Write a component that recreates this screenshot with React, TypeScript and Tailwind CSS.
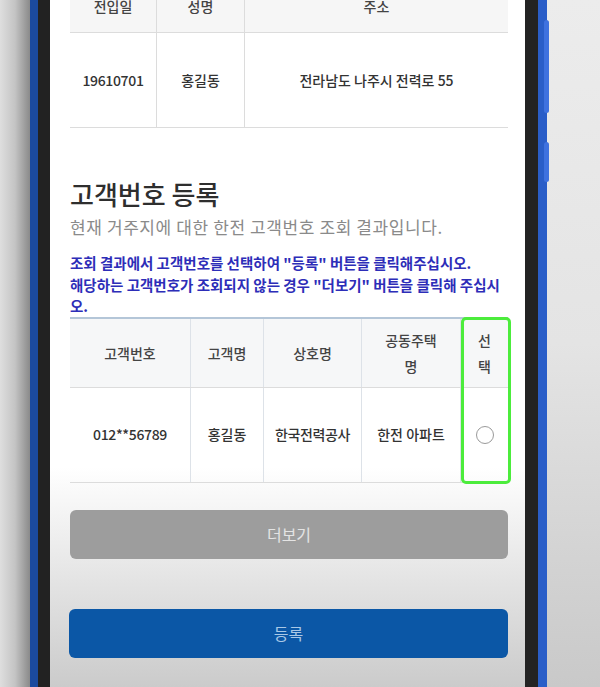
import React from "react";

const kr = "font-['Noto_Sans_CJK_KR','Noto_Sans',sans-serif]";

function ResidenceTable() {
  return (
    <div className="-mt-[19px] text-[14px] font-medium text-[#333]">
      <div className="grid h-[52px] grid-cols-[87px_88px_1fr] border-b border-[#dcdcdc] bg-[#f6f6f6] text-[#444]">
        <div className="flex items-center justify-center border-r border-[#dcdcdc]">전입일</div>
        <div className="flex items-center justify-center border-r border-[#dcdcdc]">성명</div>
        <div className="flex items-center justify-center">주소</div>
      </div>
      <div className="grid h-[95px] grid-cols-[87px_88px_1fr] border-b border-[#dcdcdc]">
        <div className="flex items-center justify-center border-r border-[#dcdcdc] tracking-tight">19610701</div>
        <div className="flex items-center justify-center border-r border-[#dcdcdc]">홍길동</div>
        <div className="flex items-center justify-center">전라남도 나주시 전력로 55</div>
      </div>
    </div>
  );
}

function CustomerTable() {
  const cols = "grid grid-cols-[121px_73px_98px_99px_47px]";
  return (
    <div className="relative text-[14px] font-medium text-[#333]">
      <div className={`${cols} h-[71px] border-t-2 border-b border-t-[#b4c6d8] border-b-[#dcdcdc] bg-[#f6f7f8] text-[#444] leading-[26px]`}>
        <div className="flex items-center justify-center border-r border-[#dde2e8]">고객번호</div>
        <div className="flex items-center justify-center border-r border-[#dde2e8]">고객명</div>
        <div className="flex items-center justify-center border-r border-[#dde2e8]">상호명</div>
        <div className="flex items-center justify-center border-r border-[#dde2e8] text-center">
          공동주택
          <br />명
        </div>
        <div className="flex items-center justify-center text-center">
          선
          <br />택
        </div>
      </div>
      <div className={`${cols} h-[95px] border-b border-[#dcdcdc]`}>
        <div className="flex items-center justify-center border-r border-[#dde2e8] tracking-tight">012**56789</div>
        <div className="flex items-center justify-center border-r border-[#dde2e8]">홍길동</div>
        <div className="flex items-center justify-center border-r border-[#dde2e8] tracking-tight">한국전력공사</div>
        <div className="flex items-center justify-center border-r border-[#dde2e8]">한전 아파트</div>
        <div className="flex items-center justify-center">
          <span className="h-[18px] w-[18px] rounded-full border-[1.5px] border-[#9a9a9a] bg-white" />
        </div>
      </div>
      {/* highlight around the select column */}
      <div className="pointer-events-none absolute top-0 bottom-[-1px] right-[-3px] w-[50px] rounded-[5px] border-[3px] border-[#4cec3c]" />
    </div>
  );
}

export default function App() {
  return (
    <div className={`flex h-[687px] w-[600px] overflow-hidden ${kr}`}>
      <div className="w-[30px] bg-linear-to-r from-[#dedede] via-[#c4c4c4] to-[#8a8a8a]" />
      <div className="w-[8px] bg-[#1b4a9e]" />
      <div className="w-[12px] bg-[#222]" />

      <main className="flex w-[475px] flex-col bg-linear-to-b from-white from-[68%] to-[#cbcbcb] pr-[17px] pl-[20px]">
        <ResidenceTable />

        <h1 className="mt-[49px] text-[26px] leading-[34px] font-medium text-[#2e2e2e]">고객번호 등록</h1>
        <p className="mt-[4px] text-[17px] leading-[24px] tracking-[0.6px] text-[#8a8a8a]">
          현재 거주지에 대한 한전 고객번호 조회 결과입니다.
        </p>

        <div className="mt-[13px] text-[14.5px] leading-[21.5px] font-bold text-[#2d2db8]">
          <p>조회 결과에서 고객번호를 선택하여 "등록" 버튼을 클릭해주십시오.</p>
          <p>해당하는 고객번호가 조회되지 않는 경우 "더보기" 버튼을 클릭해 주십시오.</p>
        </div>

        <CustomerTable />

        <button className="mt-[27px] h-[49px] rounded-[6px] bg-[#9d9d9d] text-[16px] text-[#e4e4e4]">
          더보기
        </button>
        <button className="mt-[50px] h-[49px] w-[439px] -ml-px rounded-[6px] bg-[#0b57a6] text-[16px] text-[#a9c8e6]">
          등록
        </button>
      </main>

      <div className="w-[13px] bg-[#232323]" />
      <div className="relative w-[9px] bg-[#2a5ec8]">
        <span className="absolute top-[20px] right-[-2px] h-[93px] w-[5px] rounded-sm bg-[#3f72df]" />
        <span className="absolute top-[142px] right-[-2px] h-[40px] w-[5px] rounded-sm bg-[#3f72df]" />
      </div>
      <div className="flex-1 bg-linear-to-b from-[#ececec] via-[#e4e4e4] to-[#c9c9c9]" />
    </div>
  );
}
